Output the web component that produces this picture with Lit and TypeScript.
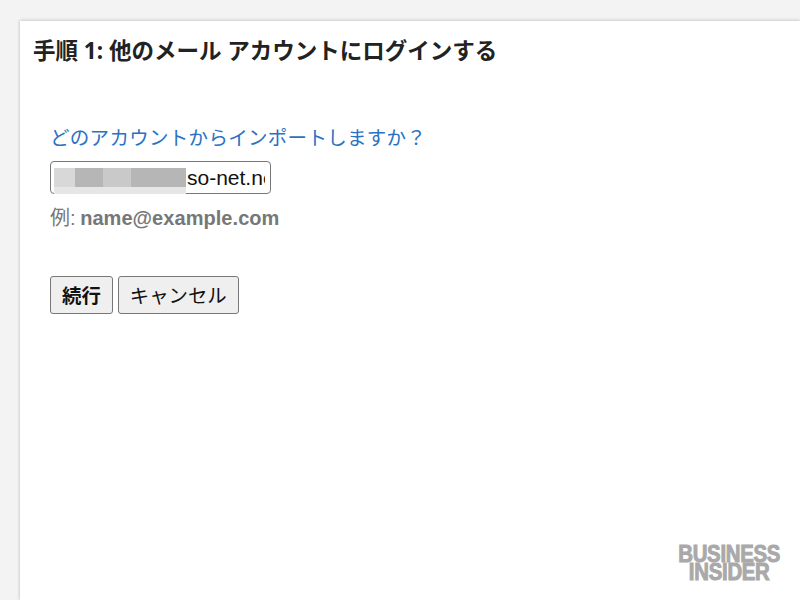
import { LitElement, html, css } from "lit";
import { customElement } from "lit/decorators.js";

@customElement("app-root")
export class AppRoot extends LitElement {
  static styles = css`
    :host {
      display: block;
      width: 800px;
      height: 600px;
      box-sizing: border-box;
      background: #f3f3f3;
      padding: 21px 0 0 20px;
      overflow: hidden;
      font-family: "Liberation Sans", "Noto Sans CJK JP", sans-serif;
    }
    .card {
      position: relative;
      box-sizing: border-box;
      height: 579px;
      background: #fff;
      box-shadow: 0 -1px 3px #cfcfcf, -1px 0 2px #dcdcdc;
      padding: 15px 0 0 13px;
    }
    h1 {
      margin: 0;
      font-family: "Noto Sans", "Noto Sans CJK JP", sans-serif;
      font-size: 22.5px;
      line-height: 30px;
      font-weight: 700;
      color: #222;
    }
    .form {
      display: flex;
      flex-direction: column;
      align-items: flex-start;
      padding: 58px 0 0 17px;
    }
    .question {
      font-size: 19.5px;
      line-height: 28px;
      color: #2a72c4;
      letter-spacing: 0.3px;
    }
    .field {
      position: relative;
      width: 221px;
      height: 33px;
      margin-top: 9px;
    }
    input {
      display: block;
      box-sizing: border-box;
      width: 100%;
      height: 100%;
      margin: 0;
      padding: 0 5px 0 136px;
      border: 1px solid #777;
      border-radius: 4px;
      background: #fff;
      font-family: "Liberation Sans", sans-serif;
      font-size: 21px;
      color: #111;
      outline: none;
    }
    .blur {
      position: absolute;
      left: 4px;
      top: 7px;
      width: 132px;
      height: 26px;
      display: flex;
      background: #e6e6e6;
    }
    .blur span { height: 19px; }
    .b1 { width: 21px; background: #d8d8d8; }
    .b2 { width: 28px; background: #b6b6b6; }
    .b3 { width: 28px; background: #c9c9c9; }
    .b4 { width: 55px; background: #b6b6b6; }
    .hint {
      margin-top: 11px;
      font-size: 20px;
      line-height: 26px;
      color: #777;
    }
    .hint b {
      font-weight: 700;
      margin-left: -1px;
      letter-spacing: 0.05px;
    }
    .actions {
      display: flex;
      gap: 5px;
      margin-top: 45px;
    }
    button {
      box-sizing: border-box;
      height: 38px;
      padding: 0 11px 2px;
      border: 1px solid #777;
      border-radius: 3px;
      background: #efefef;
      font-family: "Liberation Sans", "Noto Sans CJK JP", sans-serif;
      font-size: 19.4px;
      color: #111;
    }
    button.primary { font-weight: 700; }
    .logo {
      position: absolute;
      right: 20px;
      bottom: 19px;
      font-family: "Liberation Sans", sans-serif;
      font-weight: 700;
      font-size: 23px;
      line-height: 18px;
      letter-spacing: -0.3px;
      color: #a9a9a9;
      text-align: center;
      -webkit-text-stroke: 1px #a9a9a9;
      transform: scaleX(0.885);
      transform-origin: right center;
    }
    .logo div { display: block; }
  `;

  render() {
    return html`
      <div class="card">
        <h1>手順 1: 他のメール アカウントにログインする</h1>
        <div class="form">
          <div class="question">どのアカウントからインポートしますか？</div>
          <div class="field">
            <input type="text" .value=${"so-net.ne.jp"} />
            <div class="blur">
              <span class="b1"></span><span class="b2"></span><span class="b3"></span><span class="b4"></span>
            </div>
          </div>
          <div class="hint">例: <b>name@example.com</b></div>
          <div class="actions">
            <button class="primary">続行</button>
            <button>キャンセル</button>
          </div>
        </div>
        <div class="logo"><div>BUSINESS</div><div>INSIDER</div></div>
      </div>
    `;
  }
}
